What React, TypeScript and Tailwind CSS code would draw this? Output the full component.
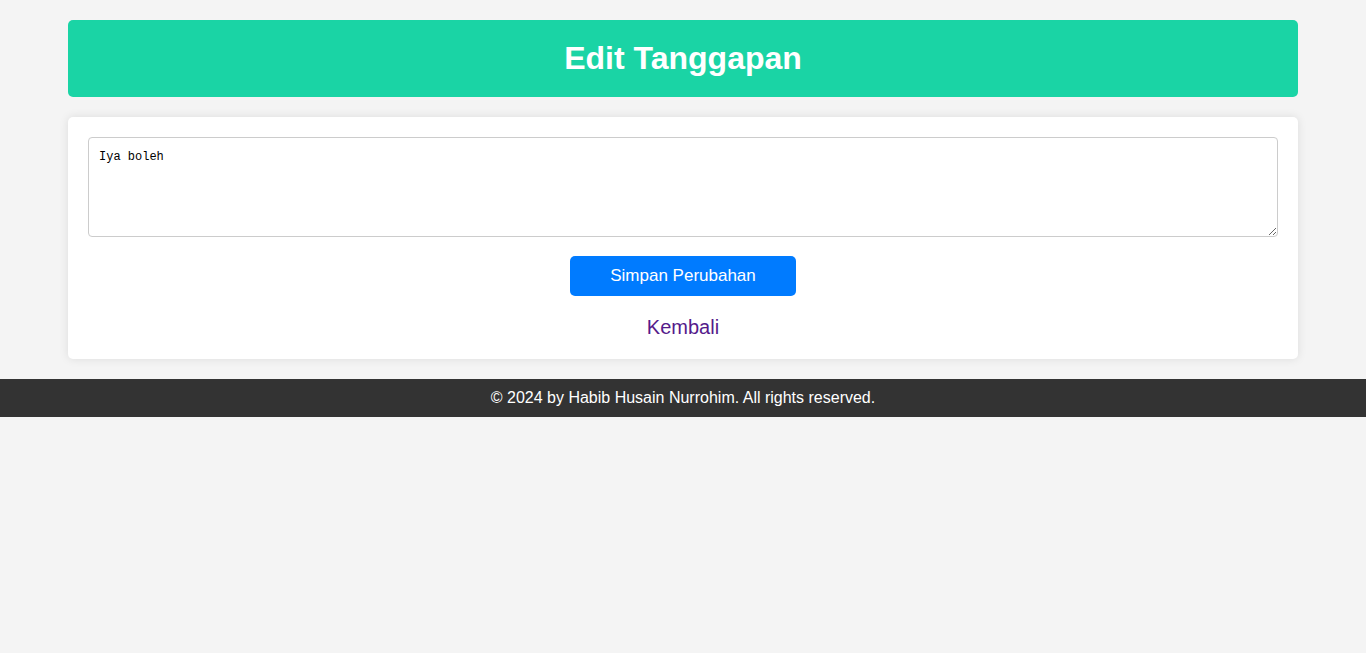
export default function App() {
  return (
    <div className="min-h-[653px] bg-[#f4f4f4] pt-[20px]" style={{ fontFamily: '"Liberation Sans", Arial, sans-serif' }}>
      <div className="mx-[68px]">
        <div className="h-[77px] rounded-[5px] bg-[#1ad4a5] flex items-center justify-center">
          <h1 className="text-[32px] font-bold text-white leading-[37px]">Edit Tanggapan</h1>
        </div>
        <div className="mt-[20px] rounded-[5px] bg-white p-[20px] shadow-[0_0_10px_rgba(0,0,0,0.1)] flex flex-col items-center">
          <textarea
            className="w-full h-[100px] border border-[#ccc] rounded-[4px] p-[10px] text-[12px] text-black outline-none resize-y"
            style={{ fontFamily: '"Liberation Mono", "DejaVu Sans Mono", monospace' }}
            defaultValue="Iya boleh"
          />
          <button className="mt-[19px] w-[226px] h-[40px] rounded-[5px] bg-[#007bff] text-white text-[17px]">
            Simpan Perubahan
          </button>
          <a href="#" className="mt-[20px] text-[20px] leading-[23px] text-[#551a8b]">Kembali</a>
        </div>
      </div>
      <footer className="mt-[20px] h-[38px] bg-[#333] text-white text-[16px] flex items-center justify-center">
        © 2024 by Habib Husain Nurrohim. All rights reserved.
      </footer>
    </div>
  );
}
